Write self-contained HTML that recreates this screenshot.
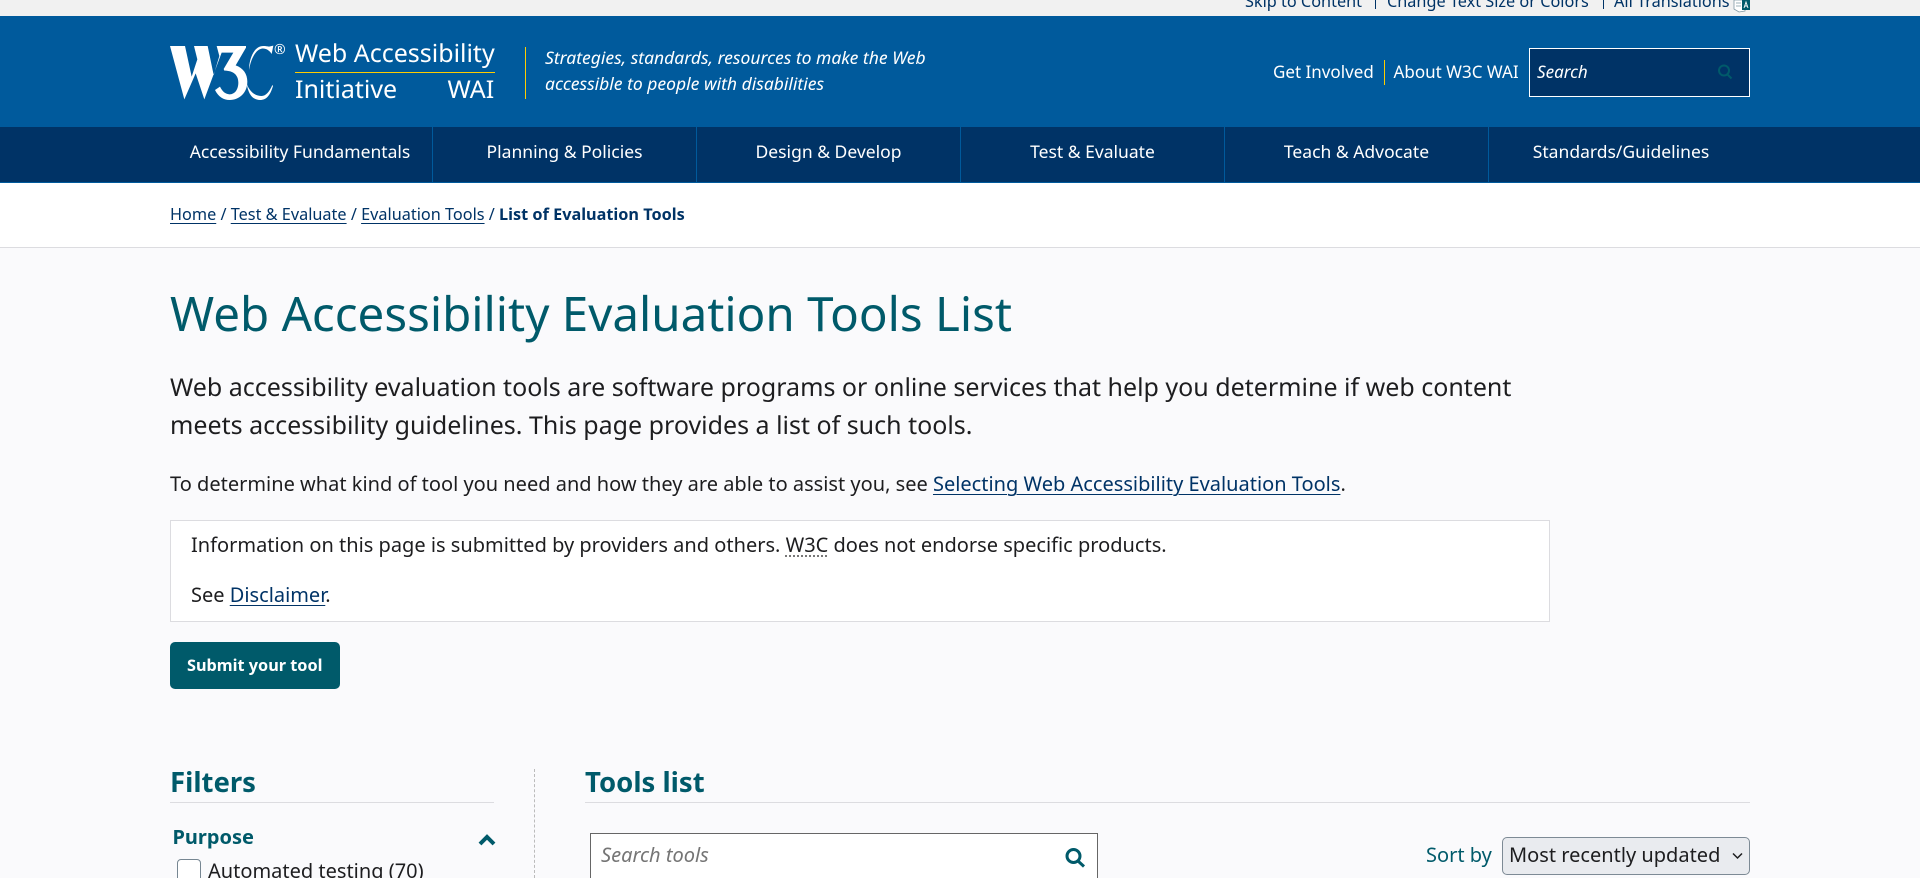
<!DOCTYPE html>
<html lang="en">
<head>
<meta charset="utf-8">
<title>Web Accessibility Evaluation Tools List</title>
<style>
html,body{margin:0;padding:0;width:1920px;height:878px;overflow:hidden;background:#fafafc;}
body{position:relative;font-family:"Noto Sans","Liberation Sans",sans-serif;color:#1d1d1f;}
.b{position:absolute;}
.t{position:absolute;white-space:nowrap;line-height:0;}
a{color:#036;text-decoration:underline;text-underline-offset:3px;text-decoration-thickness:1px;}
.w{color:#fff;}
.tl{color:#005a6a;}
.nav{position:absolute;top:152px;line-height:0;color:#fff;font-size:17.5px;white-space:nowrap;transform:translateX(-50%);}
</style>
</head>
<body>
<div class="b" style="left:0;top:0;width:1920px;height:16px;background:#f1f1f1;overflow:hidden;">
  <span class="t" style="left:1245px;top:1px;font-size:16.25px;color:#036;">Skip to Content</span>
  <span class="b" style="left:1375px;top:0;width:1px;height:9px;background:#036;"></span>
  <span class="t" style="left:1387px;top:1px;font-size:16.25px;color:#036;">Change Text Size or Colors</span>
  <span class="b" style="left:1603px;top:0;width:1px;height:9px;background:#036;"></span>
  <span class="t" style="left:1614px;top:1px;font-size:16.25px;color:#036;">All Translations</span>
  <svg class="b" style="left:1733px;top:0;" width="17" height="13" viewBox="0 0 17 13"><path d="M1 0v9l5 3 6-1V0z" fill="#fff" stroke="#7f97a3" stroke-width=".8"/><path d="M3 3h5M3 6h5" stroke="#7f97a3" stroke-width=".8"/><rect x="9" y="0" width="8" height="10" fill="#005a6a"/><path d="M11 8l2-6 2 6M11.700 6h2.600" stroke="#fff" stroke-width=".9" fill="none"/></svg>
</div>

<div class="b" style="left:0;top:16px;width:1920px;height:111px;background:#005a9c;"></div>
<svg class="b" style="left:165px;top:40px;" width="125" height="65" viewBox="0 0 375 195" role="img" aria-label="W3C">
  <title>W3C</title>
  <path fill="#fff" d="M15 18H60L80 110 97 58 87 18H128L146 105 163 48 155 18H243V23L212 76C235 84 247 102 247 125 247 158 224 180 194 180 175 180 160 170 150 150L165 140C172 155 182 163 194 163 210 163 220 148 220 128 220 105 205 92 178 92L176 87 205 38H170L118 178 92 100 58 178Z"/>
  <path fill="#fff" d="M312 20L325 17 320 42C313 30 300 24 290 26 272 30 258 55 252 90 252 60 265 18 295 18 302 18 307 19 312 20Z"/>
  <path fill="#fff" d="M245 130C255 160 275 168 290 168 302 168 314 155 322 135L324 138C316 165 305 180 285 180 265 180 250 165 245 130Z"/>
</svg>
<span class="t w" style="left:274px;top:50px;font-size:14px;">®</span>

<span class="t w" style="left:295px;top:53px;font-size:25px;">Web Accessibility</span>
<div class="b" style="left:295px;top:72px;width:200px;height:1px;background:#fc0;"></div>
<span class="t w" style="left:295px;top:89px;font-size:25px;">Initiative</span>
<span class="t w" style="left:447.500px;top:89px;font-size:25px;">WAI</span>
<div class="b" style="left:525px;top:47px;width:1px;height:52px;background:#fc0;"></div>
<span class="t w" style="left:545px;top:58px;font-size:17.500px;font-style:italic;">Strategies, standards, resources to make the Web</span>
<span class="t w" style="left:545px;top:84px;font-size:17.500px;font-style:italic;">accessible to people with disabilities</span>

<span class="t w" style="left:1273px;top:72px;font-size:17px;">Get Involved</span>
<div class="b" style="left:1384px;top:60px;width:1px;height:25px;background:#fc0;"></div>
<span class="t w" style="left:1393.500px;top:72px;font-size:17px;">About W3C WAI</span>
<div class="b" style="left:1529px;top:48px;width:219px;height:47px;background:#036;border:1px solid #fff;"></div>
<span class="t w" style="left:1537px;top:72px;font-size:17px;font-style:italic;">Search</span>
<svg class="b" style="left:1716px;top:62px;" width="18" height="20" viewBox="0 0 18 20"><circle cx="8" cy="8.500" r="5" fill="none" stroke="#005a6a" stroke-width="2"/><path d="M11.500 12.500l4 4" stroke="#005a6a" stroke-width="2"/></svg>

<div class="b" style="left:0;top:127px;width:1920px;height:55px;background:#036;border-bottom:1px solid #005a9c;"></div>
<div class="b" style="left:432px;top:127px;width:1px;height:55px;background:#005a9c;"></div>
<div class="b" style="left:696px;top:127px;width:1px;height:55px;background:#005a9c;"></div>
<div class="b" style="left:960px;top:127px;width:1px;height:55px;background:#005a9c;"></div>
<div class="b" style="left:1224px;top:127px;width:1px;height:55px;background:#005a9c;"></div>
<div class="b" style="left:1488px;top:127px;width:1px;height:55px;background:#005a9c;"></div>
<span class="nav" style="left:300px;">Accessibility Fundamentals</span>
<span class="nav" style="left:564.500px;">Planning &amp; Policies</span>
<span class="nav" style="left:828.500px;">Design &amp; Develop</span>
<span class="nav" style="left:1092.500px;">Test &amp; Evaluate</span>
<span class="nav" style="left:1356.500px;">Teach &amp; Advocate</span>
<span class="nav" style="left:1621px;">Standards/Guidelines</span>

<div class="b" style="left:0;top:183px;width:1920px;height:64px;background:#fff;border-bottom:1px solid #dcdce0;"></div>
<span class="t" style="left:170px;top:214px;font-size:16.250px;color:#036;"><a href="#">Home</a> / <a href="#">Test &amp; Evaluate</a> / <a href="#">Evaluation Tools</a> / <b>List of Evaluation Tools</b></span>

<h1 class="t tl" style="margin:0;left:170px;top:313px;font-size:47.500px;font-weight:400;">Web Accessibility Evaluation Tools List</h1>
<p class="t" style="margin:0;left:170px;top:387px;font-size:25px;">Web accessibility evaluation tools are software programs or online services that help you determine if web content</p>
<p class="t" style="margin:0;left:170px;top:425px;font-size:25px;">meets accessibility guidelines. This page provides a list of such tools.</p>
<p class="t" style="margin:0;left:170px;top:484px;font-size:20px;">To determine what kind of tool you need and how they are able to assist you, see <a href="#">Selecting Web Accessibility Evaluation Tools</a>.</p>

<div class="b" style="left:170px;top:520px;width:1378px;height:100px;background:#fff;border:1px solid #dcdce0;"></div>
<p class="t" style="margin:0;left:191px;top:545px;font-size:20px;">Information on this page is submitted by providers and others. <span style="text-decoration:underline dotted #777;text-underline-offset:3px;">W3C</span> does not endorse specific products.</p>
<p class="t" style="margin:0;left:191px;top:595px;font-size:20px;">See <a href="#">Disclaimer</a>.</p>

<div class="b" style="left:170px;top:642px;width:170px;height:47px;background:#005a6a;border-radius:5px;"></div>
<span class="t w" style="left:187px;top:665px;font-size:16.250px;font-weight:700;">Submit your tool</span>

<h2 class="t tl" style="margin:0;left:170px;top:783px;font-size:27.500px;font-weight:700;">Filters</h2>
<div class="b" style="left:170px;top:802px;width:324px;height:1px;background:#dcdce0;"></div>
<div class="b" style="left:534px;top:769px;width:0;height:109px;border-left:1px dashed #bbb;"></div>
<h2 class="t tl" style="margin:0;left:585px;top:783px;font-size:27.500px;font-weight:700;">Tools list</h2>
<div class="b" style="left:585px;top:802px;width:1165px;height:1px;background:#dcdce0;"></div>

<span class="t tl" style="left:172.500px;top:837px;font-size:20px;font-weight:700;">Purpose</span>
<svg class="b" style="left:477px;top:833px;" width="20" height="14" viewBox="0 0 20 14"><path d="M3 11l7-7 7 7" fill="none" stroke="#005a6a" stroke-width="4"/></svg>
<div class="b" style="left:177px;top:859px;width:24px;height:26px;box-sizing:border-box;background:#fff;border:1px solid #768692;border-radius:4px;"></div>
<span class="t" style="left:208px;top:871px;font-size:20px;">Automated testing (70)</span>

<div class="b" style="left:590px;top:833px;width:506px;height:60px;background:#fff;border:1px solid #666;"></div>
<span class="t" style="left:601px;top:855px;font-size:20px;font-style:italic;color:#757575;">Search tools</span>
<svg class="b" style="left:1063px;top:846px;" width="24" height="24" viewBox="0 0 24 24"><circle cx="10.500" cy="10" r="6.500" fill="none" stroke="#005a6a" stroke-width="3"/><path d="M15 15l6 5.500" stroke="#005a6a" stroke-width="3"/></svg>

<span class="t tl" style="left:1426px;top:855px;font-size:20px;">Sort by</span>
<div class="b" style="left:1502px;top:837px;width:246px;height:36px;background:#e9ebef;border:1px solid #7d8a95;border-radius:5px;"></div>
<span class="t" style="left:1509px;top:855px;font-size:20px;">Most recently updated</span>
<svg class="b" style="left:1731px;top:851px;" width="13" height="10" viewBox="0 0 13 10"><path d="M2 2.500l4.500 4.500 4.500-4.500" fill="none" stroke="#1d1d1f" stroke-width="1.500"/></svg>
</body>
</html>
